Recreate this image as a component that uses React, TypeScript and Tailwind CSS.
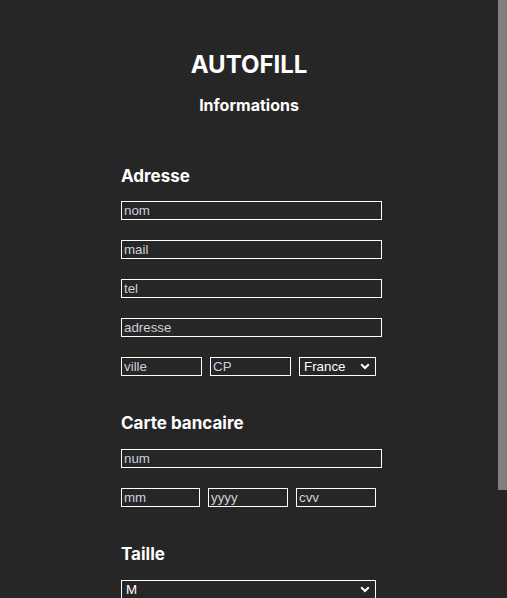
import React from "react";

const inputCls =
  "block h-[19px] border border-white bg-transparent px-[2px] text-[13.333px] leading-[15px] text-white placeholder:text-[#cdd1d9] outline-none [font-family:'Liberation_Sans',Arial,sans-serif]";

function Chevron() {
  return (
    <svg
      width="10"
      height="7"
      viewBox="0 0 10 7"
      className="pointer-events-none absolute top-[6px] right-[6px]"
    >
      <path d="M1.2 1.2 5 5 8.8 1.2" fill="none" stroke="#fff" strokeWidth="2" />
    </svg>
  );
}

function Select({ value, options, width }: { value: string; options: string[]; width: string }) {
  return (
    <div className={`relative h-[19px] ${width}`}>
      <select
        defaultValue={value}
        className="block h-[19px] w-full appearance-none border border-white bg-[#262626] py-0 pl-[4px] text-[13.333px] leading-[15px] text-white outline-none [font-family:'Liberation_Sans',Arial,sans-serif]"
      >
        {options.map((o) => (
          <option key={o}>{o}</option>
        ))}
      </select>
      <Chevron />
    </div>
  );
}

export default function App() {
  return (
    <div className="flex h-screen bg-[#262626] text-white [font-family:Inter,'Noto_Sans',sans-serif]">
      <div className="flex-1 overflow-hidden">
        <div className="pt-[53px] pb-[131px]">
          {/* Header */}
          <h1 className="text-center text-[24px] leading-[24px] font-bold">AUTOFILL</h1>
          <h2 className="mt-[20px] text-center text-[16px] leading-[16px] font-bold">Informations</h2>

          <form className="mt-[55px] ml-[121px] flex w-[261px] flex-col">
            {/* Adresse */}
            <h3 className="text-[17px] leading-[17px] font-bold">Adresse</h3>
            <div className="mt-[16px] flex flex-col gap-[20px]">
              <input className={`${inputCls} w-full`} placeholder="nom" />
              <input className={`${inputCls} w-full`} placeholder="mail" />
              <input className={`${inputCls} w-full`} placeholder="tel" />
              <input className={`${inputCls} w-full`} placeholder="adresse" />
              <div className="flex gap-[8px]">
                <input className={`${inputCls} w-[81px]`} placeholder="ville" />
                <input className={`${inputCls} w-[81px]`} placeholder="CP" />
                <Select value="France" options={["France", "Belgique", "Suisse"]} width="w-[77px]" />
              </div>
            </div>

            {/* Carte bancaire */}
            <h3 className="mt-[39px] text-[17px] leading-[17px] font-bold">Carte bancaire</h3>
            <div className="mt-[17px] flex flex-col gap-[20px]">
              <input className={`${inputCls} w-full`} placeholder="num" />
              <div className="flex gap-[8px]">
                <input className={`${inputCls} w-[79px]`} placeholder="mm" />
                <input className={`${inputCls} w-[80px]`} placeholder="yyyy" />
                <input className={`${inputCls} w-[80px]`} placeholder="cvv" />
              </div>
            </div>

            {/* Taille */}
            <h3 className="mt-[39px] text-[17px] leading-[17px] font-bold">Taille</h3>
            <div className="mt-[17px]">
              <Select value="M" options={["XS", "S", "M", "L", "XL"]} width="w-[255px]" />
            </div>
          </form>
        </div>
      </div>

      {/* scrollbar */}
      <div className="w-[9px] shrink-0">
        <div className="h-[490px] bg-[#808080]" />
      </div>
    </div>
  );
}
